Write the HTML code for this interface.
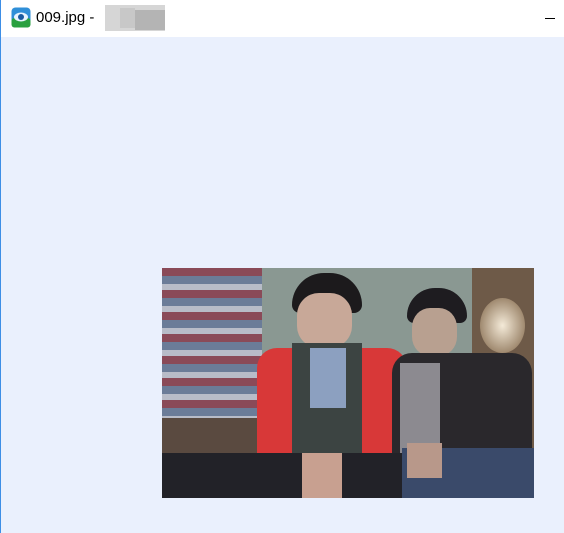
<!DOCTYPE html>
<html><head><meta charset="utf-8"><style>
*{margin:0;padding:0;box-sizing:border-box}
body{width:564px;height:533px;overflow:hidden;background:#eaf0fd;font-family:"Liberation Sans",sans-serif;position:relative}
#bar{position:absolute;left:0;top:0;width:564px;height:37px;background:#fff}
#lb{position:absolute;left:0;top:0;width:1px;height:533px;background:#3d8ee6}
.t{position:absolute;left:36px;top:9px;font-size:15px;color:#000}
.b{position:absolute}
#img{position:absolute;left:162px;top:268px;width:372px;height:230px;overflow:hidden;background:#5c6466}
#img div{position:absolute}
</style></head><body>
<div id="bar"></div>
<div id="lb"></div>
<svg class="b" style="left:11px;top:7px" width="20" height="21" viewBox="0 0 20 21">
<rect x="0.5" y="0.5" width="19" height="20" rx="4" fill="#2f8fd8"/>
<rect x="0.5" y="11" width="19" height="9.5" rx="3" fill="#2aa040"/>
<ellipse cx="10" cy="10" rx="7" ry="4.5" fill="#e8f4ff"/>
<circle cx="10" cy="10" r="3" fill="#1a5aa0"/>
</svg>
<div class="t">009.jpg -</div>
<div class="b" style="left:105px;top:5px;width:60px;height:26px;background:#d6d6d6"></div>
<div class="b" style="left:120px;top:8px;width:15px;height:20px;background:#c8c8c8"></div>
<div class="b" style="left:135px;top:10px;width:30px;height:20px;background:#b4b4b4"></div>
<div class="b" style="left:545px;top:18px;width:10px;height:1px;background:#000"></div>
<div id="img">
<div style="left:0;top:0;width:110px;height:150px;background:repeating-linear-gradient(180deg,#8a4a58 0 8px,#6b7c98 8px 16px,#b8bcc8 16px 22px)"></div>
<div style="left:100px;top:0;width:210px;height:120px;background:#8a9892"></div>
<div style="left:310px;top:0;width:62px;height:230px;background:#6e5a48"></div>
<div style="left:318px;top:30px;width:45px;height:55px;border-radius:50%;background:radial-gradient(#f4ead8,#a08a70 70%)"></div>
<div style="left:0;top:150px;width:110px;height:80px;background:#5a4a40"></div>
<div style="left:130px;top:5px;width:70px;height:40px;border-radius:40px 40px 10px 10px;background:#1c1a1c"></div>
<div style="left:135px;top:25px;width:55px;height:55px;border-radius:40%;background:#c8a898"></div>
<div style="left:245px;top:20px;width:60px;height:35px;border-radius:40px 40px 10px 10px;background:#1e1c20"></div>
<div style="left:250px;top:40px;width:45px;height:48px;border-radius:40%;background:#b8a090"></div>
<div style="left:95px;top:80px;width:150px;height:110px;border-radius:20px 20px 0 0;background:#d83838"></div>
<div style="left:130px;top:75px;width:70px;height:120px;background:#3c4442"></div>
<div style="left:148px;top:80px;width:36px;height:60px;background:#8ca0c0"></div>
<div style="left:230px;top:85px;width:140px;height:110px;border-radius:20px 20px 0 0;background:#2a282c"></div>
<div style="left:238px;top:95px;width:40px;height:90px;background:#8c8a90"></div>
<div style="left:0;top:185px;width:372px;height:45px;background:#222228"></div>
<div style="left:240px;top:180px;width:132px;height:50px;background:#3a4a6a"></div>
<div style="left:140px;top:185px;width:40px;height:45px;background:#c8a090"></div>
<div style="left:245px;top:175px;width:35px;height:35px;background:#b8988a"></div>
</div>
</body></html>
